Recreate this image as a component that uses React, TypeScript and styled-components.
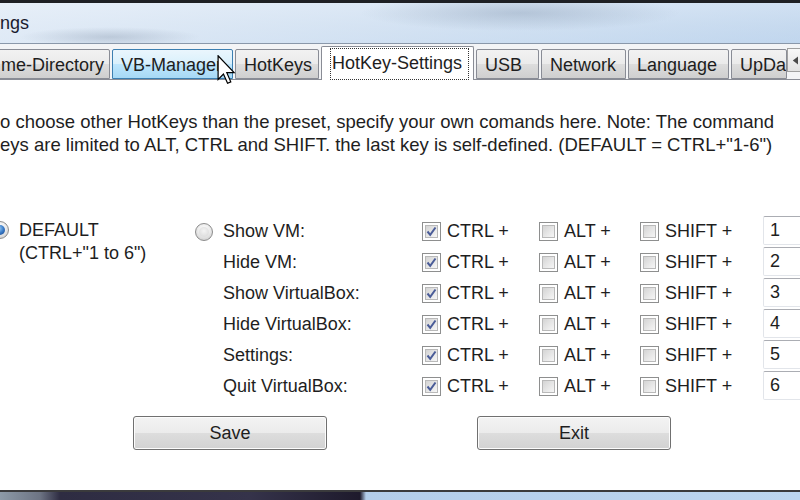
import styled, { createGlobalStyle } from "styled-components";

const GlobalStyle = createGlobalStyle`
  html, body {
    margin: 0;
    padding: 0;
    background: #fff;
    overflow: hidden;
  }
  body {
    font-family: "Liberation Sans", Arial, sans-serif;
    color: #1e1e1e;
  }
`;

const Screen = styled.div`
  width: 800px;
  height: 500px;
  display: flex;
  flex-direction: column;
  overflow: hidden;
  position: relative;
`;

const TitleBar = styled.div`
  height: 40px;
  border-top: 3px solid #1e2024;
  border-bottom: 1px solid #8a98aa;
  background:
    radial-gradient(ellipse 90px 10px at 110px 34px, rgba(150, 165, 185, 0.45), transparent),
    radial-gradient(ellipse 160px 18px at 520px 10px, rgba(120, 140, 165, 0.35), transparent),
    linear-gradient(90deg, rgba(235, 242, 250, 0.7), rgba(190, 214, 240, 0.4)),
    linear-gradient(180deg, #dde8f4 0%, #ccdcee 55%, #c2d6ec 100%);
  display: flex;
  align-items: center;
  font-size: 18px;
  color: #1a1a2e;
`;

const TabStrip = styled.div`
  position: relative;
  height: 35px;
  display: flex;
  align-items: flex-end;
  gap: 2px;
  margin-left: -8px;
  background: #f3f4f6;
  border-bottom: 1px solid #898c95;
`;

const Tab = styled.div<{ $active?: boolean; $hover?: boolean; $width: number }>`
  width: ${(p) => p.$width}px;
  flex: none;
  height: ${(p) => (p.$active ? "34px" : "30px")};
  margin-bottom: ${(p) => (p.$active ? "-1px" : "0")};
  padding: ${(p) => (p.$active ? "0 0 0 9px" : "2px 0 0 8px")};
  display: flex;
  align-items: center;
  font-size: 18px;
  white-space: nowrap;
  overflow: hidden;
  box-sizing: border-box;
  border: 1px solid ${(p) => (p.$hover ? "#3c7fb1" : "#898c95")};
  border-bottom: ${(p) => (p.$active ? "none" : undefined)};
  border-radius: 2px 2px 0 0;
  background: ${(p) =>
    p.$active
      ? "#fff"
      : p.$hover
      ? "linear-gradient(180deg, #eaf6fd 0%, #d9f0fc 50%, #bee6fd 51%, #a7d9f5 100%)"
      : "linear-gradient(180deg, #f2f2f2 0%, #ebebeb 50%, #dddddd 51%, #cfcfcf 100%)"};
`;

const FocusLabel = styled.span`
  outline: 1px dotted #333;
  outline-offset: 0;
  padding: 4px 6px 5px 1px;
`;

const Spinner = styled.div`
  position: absolute;
  right: -8px;
  top: 4px;
  width: 21px;
  height: 24px;
  border: 1px solid #a0a0a0;
  background: linear-gradient(180deg, #f8f8f8, #e2e2e2);
  display: flex;
  align-items: center;
  padding-left: 4px;
  box-sizing: border-box;
`;

const Content = styled.div`
  flex: 1;
  background: #fff;
  display: flex;
  flex-direction: column;
  padding-top: 30px;
`;

const Description = styled.p`
  margin: 0;
  font-size: 18.5px;
  line-height: 23px;
  white-space: nowrap;
`;

const HotkeyGrid = styled.div`
  margin-top: 60px;
  display: grid;
  grid-template-columns: 195px 28px 199px 117px 101px 123px 40px;
  grid-auto-rows: 31px;
`;

const DefaultCell = styled.div`
  grid-row: 1 / span 2;
  display: flex;
  align-items: flex-start;
  gap: 10px;
  margin-left: -9px;
  padding-top: 5px;
`;

const DefaultText = styled.div`
  font-size: 18px;
  line-height: 23px;
  margin-top: -2px;
`;

const Cell = styled.div`
  display: flex;
  align-items: center;
  gap: 6px;
  font-size: 18px;
  white-space: nowrap;
`;

const Radio = styled.span<{ $checked?: boolean }>`
  width: 18px;
  height: 18px;
  flex: none;
  box-sizing: border-box;
  border-radius: 50%;
  border: 1px solid #8c8c8c;
  display: flex;
  align-items: center;
  justify-content: center;
  background: radial-gradient(circle at 50% 35%, #ffffff 0%, #ececec 45%, #c4c4c4 100%);
  &::after {
    content: "";
    width: 10px;
    height: 10px;
    border-radius: 50%;
    background: ${(p) =>
      p.$checked
        ? "radial-gradient(circle at 40% 35%, #9cd0f5 0%, #3a7bc8 50%, #173f80 100%)"
        : "radial-gradient(circle at 50% 40%, #f4f4f4 0%, #d6d6d6 100%)"};
  }
`;

const CheckBox = styled.span`
  width: 19px;
  height: 19px;
  flex: none;
  box-sizing: border-box;
  border: 1px solid #8e8f8f;
  background: #fff;
  padding: 2px;
  display: flex;
`;

const CheckInner = styled.span`
  flex: 1;
  border: 1px solid #b9b9b9;
  background: linear-gradient(135deg, #d4d4d4 0%, #ececec 70%, #f6f6f6 100%);
  display: flex;
  align-items: center;
  justify-content: center;
`;

const KeyInput = styled.div`
  height: 29px;
  width: 44px;
  box-sizing: border-box;
  border: 1px solid #e2e5ea;
  border-top-color: #abadb3;
  border-radius: 2px;
  font-size: 18px;
  padding-left: 6px;
  display: flex;
  align-items: center;
  align-self: start;
`;

const ButtonRow = styled.div`
  margin-top: 14px;
  display: flex;
  gap: 150px;
  padding-left: 133px;
`;

const Button = styled.button`
  width: 194px;
  height: 34px;
  border: 1px solid #707070;
  border-radius: 3px;
  box-shadow: inset 0 0 0 1px #fcfcfc;
  background: linear-gradient(180deg, #f3f3f3 0%, #ebebeb 50%, #dddddd 51%, #d2d2d2 100%);
  font-family: "Liberation Sans", Arial, sans-serif;
  font-size: 18px;
  color: #1e1e1e;
  padding: 0;
`;

const Footer = styled.div`
  height: 8px;
  border-top: 2px solid #3a3a3c;
  background: linear-gradient(
    90deg,
    #8d9aa8 0px,
    #6d7484 40px,
    #2e2c42 60px,
    #35334a 250px,
    #1e1a2c 360px,
    #b3cdea 366px,
    #bcd5ef 800px
  );
`;

const Cursor = styled.svg`
  position: absolute;
  left: 217px;
  top: 55px;
`;

const Check = () => (
  <svg width="11" height="11" viewBox="0 0 11 11">
    <path d="M1.5 5.5 L4.2 8.8 L9.5 1.5" fill="none" stroke="#4a5c98" strokeWidth="2" />
  </svg>
);

const CheckField = ({ checked, label }: { checked: boolean; label: string }) => (
  <Cell>
    <CheckBox>
      <CheckInner>{checked && <Check />}</CheckInner>
    </CheckBox>
    {label}
  </Cell>
);

const actions = [
  "Show VM:",
  "Hide VM:",
  "Show VirtualBox:",
  "Hide VirtualBox:",
  "Settings:",
  "Quit VirtualBox:",
];

const tabs: [string, number][] = [
  ["me-Directory", 118],
  ["VB-Manager", 121],
  ["HotKeys", 84],
  ["HotKey-Settings", 153],
  ["USB", 63],
  ["Network", 85],
  ["Language", 101],
  ["UpDa", 56],
];

export default function App() {
  return (
    <Screen>
      <GlobalStyle />
      <TitleBar>ngs</TitleBar>
      <TabStrip>
        {tabs.map(([t, w]) =>
          t === "HotKey-Settings" ? (
            <Tab key={t} $width={w} $active>
              <FocusLabel>{t}</FocusLabel>
            </Tab>
          ) : (
            <Tab key={t} $width={w} $hover={t === "VB-Manager"}>
              {t}
            </Tab>
          )
        )}
        <Spinner>
          <svg width="7" height="9" viewBox="0 0 7 9">
            <path d="M6 0.5 L0.8 4.5 L6 8.5 Z" fill="#4a4a4a" />
          </svg>
        </Spinner>
      </TabStrip>
      <Content>
        <Description>
          o choose other HotKeys than the preset, specify your own comands here. Note: The command
          <br />
          eys are limited to ALT, CTRL and SHIFT. the last key is self-defined. (DEFAULT = CTRL+"1-6")
        </Description>
        <HotkeyGrid>
          <DefaultCell>
            <Radio $checked />
            <DefaultText>
              DEFAULT
              <br />
              (CTRL+"1 to 6")
            </DefaultText>
          </DefaultCell>
          {actions.map((a, i) => (
            <>
              <Cell key={a + "r"} style={{ gridColumn: 2 }}>
                {i === 0 && <Radio />}
              </Cell>
              <Cell key={a}>{a}</Cell>
              <CheckField checked label="CTRL +" />
              <CheckField checked={false} label="ALT +" />
              <CheckField checked={false} label="SHIFT +" />
              <KeyInput>{i + 1}</KeyInput>
            </>
          ))}
        </HotkeyGrid>
        <ButtonRow>
          <Button>Save</Button>
          <Button>Exit</Button>
        </ButtonRow>
      </Content>
      <Footer />
      <Cursor width="19" height="29" viewBox="0 0 12 19">
        <path d="M0.5 0.5 L0.5 16 L4 12.5 L6.7 18.5 L8.8 17.6 L6.2 11.6 L11 11.6 Z" fill="#fff" stroke="#000" strokeWidth="0.8" />
      </Cursor>
    </Screen>
  );
}
